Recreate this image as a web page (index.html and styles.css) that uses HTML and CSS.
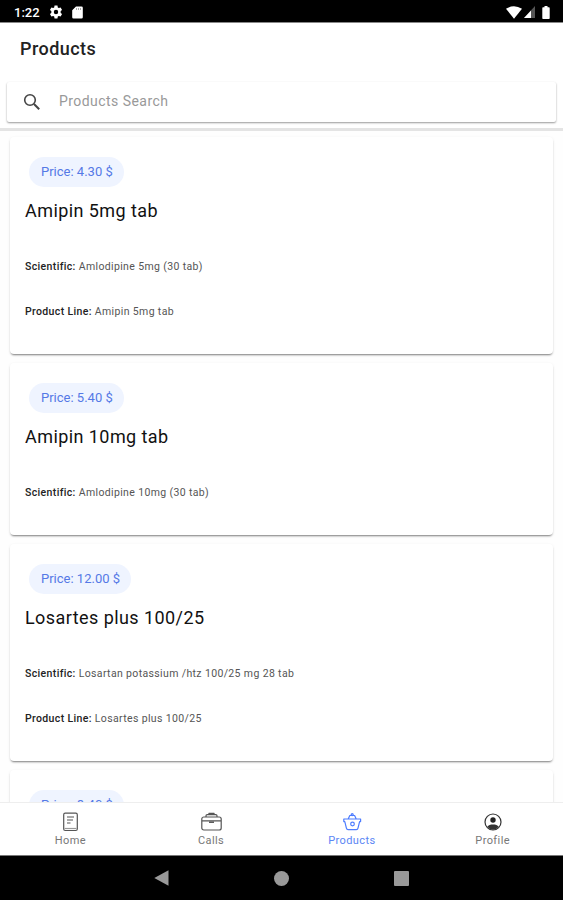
FILE: index.html
```html
<!DOCTYPE html>
<html lang="en">
<head>
    <meta charset="UTF-8">
    <meta name="viewport" content="width=device-width, initial-scale=1.0">
    <title>Products</title>
    <link rel="stylesheet" href="styles.css">
</head>
<body>
    <div class="status-bar">
        <span class="time">1:22</span>
        <svg class="gear" width="14" height="14" viewBox="0 0 24 24"><path fill="#fff" fill-rule="evenodd" d="M9.5 1h5l.6 3.2 1.8 1 3-1.100 2.500 4.300-2.400 2v3.200l2.400 2-2.500 4.300-3-1.100-1.800 1-.6 3.200h-5l-.6-3.200-1.800-1-3 1.100-2.500-4.300 2.400-2v-3.200l-2.400-2 2.500-4.300 3 1.100 1.800-1zM12 8.200a3.800 3.800 0 1 0 0 7.600 3.800 3.800 0 0 0 0-7.600z"/></svg>
        <svg class="sd" width="11" height="13" viewBox="0 0 11 13"><path fill="#fff" d="M4 .5h5.500a1.300 1.300 0 0 1 1.300 1.300v9.400a1.300 1.300 0 0 1-1.300 1.300h-8A1.300 1.300 0 0 1 .2 11.200V4.300z"/><path stroke="#aaa" d="M4.500 2v2M6.500 2v2M8.500 2v2"/></svg>
        <div class="status-right">
            <svg width="16" height="13" viewBox="0 0 16 13"><path fill="#fff" d="M0 2.800Q8-2.300 16 2.800L8 12.800z"/></svg>
            <svg class="signal" width="11" height="12" viewBox="0 0 11 12"><path fill="#555" d="M11 0v12H0z"/><path fill="#fff" d="M7 4.400V12H0z"/></svg>
            <svg class="battery" width="8" height="13" viewBox="0 0 8 13"><path fill="#fff" d="M2.500 0h3v1.300h1.200c.6 0 1 .4 1 1V12c0 .6-.4 1-1 1H1.300c-.6 0-1-.4-1-1V2.300c0-.6.400-1 1-1h1.200z"/></svg>
        </div>
    </div>

    <header class="header">
        <h1>Products</h1>
        <div class="search">
            <svg width="18" height="18" viewBox="0 0 18 18"><g fill="none" stroke="#444" stroke-width="1.600"><circle cx="7" cy="7" r="5.300"/><path stroke-width="2" d="M11 11l5.200 5.200"/></g></svg>
            <span>Products Search</span>
        </div>
    </header>

    <main class="list">
        <div class="card">
            <span class="price">Price: 4.30 $</span>
            <h2>Amipin 5mg tab</h2>
            <p><b>Scientific:</b> Amlodipine 5mg (30 tab)</p>
            <p><b>Product Line:</b> Amipin 5mg tab</p>
        </div>
        <div class="card">
            <span class="price">Price: 5.40 $</span>
            <h2>Amipin 10mg tab</h2>
            <p><b>Scientific:</b> Amlodipine 10mg (30 tab)</p>
        </div>
        <div class="card">
            <span class="price">Price: 12.00 $</span>
            <h2>Losartes plus 100/25</h2>
            <p><b>Scientific:</b> Losartan potassium /htz 100/25 mg 28 tab</p>
            <p><b>Product Line:</b> Losartes plus 100/25</p>
        </div>
        <div class="card">
            <span class="price">Price: 8.40 $</span>
        </div>
    </main>

    <nav class="tabs">
        <a class="tab">
            <svg width="22" height="20" viewBox="0 0 22 20"><g fill="none" stroke="#555" stroke-width="1.200"><rect x="4.700" y="1.200" width="13.600" height="17.300" rx="1.500"/><path d="M8 5h7M8 8h6M8 11h3.500"/><path stroke="#999" d="M5.500 16.500h12"/></g></svg>
            <span>Home</span>
        </a>
        <a class="tab">
            <svg width="22" height="20" viewBox="0 0 22 20"><g fill="none" stroke="#555" stroke-width="1.200"><rect x="1.800" y="5" width="19.400" height="13" rx="2"/><path d="M6 5V3.800c0-.7.500-1.100 1.200-1.100h8.600c.7 0 1.200.4 1.200 1.100V5M8.500 2.500l.6-1.200h4.800l.6 1.200M2 8.800h19"/><path stroke-width="1.500" d="M9 10.200h5"/></g></svg>
            <span>Calls</span>
        </a>
        <a class="tab active">
            <svg width="22" height="20" viewBox="0 0 22 20"><g fill="none" stroke="#4d7cff" stroke-width="1.200" stroke-linejoin="round"><path d="M2.800 7h16.800v2.600h-1l-1.600 6.600c-.2 1-.8 1.500-1.700 1.500H7.100c-.9 0-1.500-.5-1.700-1.500L3.800 9.600h-1zM7.300 6.800l1.500-3.300h4.800l1.500 3.300"/><circle cx="11.200" cy="2.600" r="1"/><circle cx="11.500" cy="12" r="1.800"/></g></svg>
            <span>Products</span>
        </a>
        <a class="tab">
            <svg width="22" height="20" viewBox="0 0 22 20"><circle cx="11" cy="10" r="8" fill="none" stroke="#333" stroke-width="1.200"/><circle cx="11" cy="8" r="2.700" fill="#222"/><path fill="#333" d="M5.300 14.800c1-1.700 3.200-2.300 5.700-2.300s4.700.6 5.700 2.300A7.500 7.500 0 0 1 11 17.800a7.500 7.500 0 0 1-5.700-3z"/></svg>
            <span>Profile</span>
        </a>
    </nav>

    <div class="android-nav">
        <svg width="15" height="16" viewBox="0 0 15 16"><path fill="#999" d="M14.500.3v15.400L.3 8z"/></svg>
        <div class="circle"></div>
        <div class="square"></div>
    </div>
</body>
</html>
```

FILE: styles.css
```css
* { box-sizing: border-box; }
body { margin: 0; height: 900px; display: flex; flex-direction: column; overflow: hidden; background: #fff; color: #111; font-family: Roboto, sans-serif; }
h1, h2, p { margin: 0; }
svg { display: block; flex: none; }

.status-bar { flex: none; height: 23px; display: flex; align-items: center; background: #000; color: #fff; padding: 2px 13px 0 14px; border-bottom: 1px solid #888; }
.time { width: 35px; font-size: 13px; font-weight: 500; }
.sd { margin-left: 9px; }
.status-right { margin-left: auto; display: flex; align-items: center; }
.signal { margin-left: 2px; }
.battery { margin-left: 7px; }

.header { flex: none; height: 108px; padding: 0 7px; border-bottom: 3px solid #e4e4e4; }
.header h1 { height: 59px; padding: 15px 0 0 13px; font-size: 18px; line-height: 21px; font-weight: 500; letter-spacing: 0.45px; color: #222; }
.search { height: 40px; display: flex; align-items: center; padding: 0 16px 1px; border-radius: 2px; box-shadow: 0 1px 2px rgba(0, 0, 0, 0.4); }
.search span { margin-left: 18px; font-size: 14px; line-height: 16px; padding-bottom: 1px; letter-spacing: 0.45px; color: #999; }

.list { flex: 1; min-height: 0; overflow: hidden; padding: 6px 10px 0; background: #fefefe; }
.card { padding: 20px 15px 21px; margin-bottom: 9px; border-radius: 4px; background: #fff; box-shadow: 0 2px 2px -1px rgba(0, 0, 0, 0.45), 0 1px 3px rgba(0, 0, 0, 0.1); }
.price { display: block; width: fit-content; height: 30px; margin-left: 4px; padding: 0 11px 0 12px; border-radius: 15px; background: #eff4ff; color: #5579e6; font-size: 13px; line-height: 29px; }
.card h2 { margin: 11px 0 19px; font-size: 18px; line-height: 26px; font-weight: 400; letter-spacing: 0.43px; }
.card p { height: 45px; padding-top: 17px; font-size: 10.5px; line-height: 14px; letter-spacing: 0.36px; color: #555; }
.card b { font-weight: 500; color: #222; }

.tabs { flex: none; height: 54px; display: flex; border-top: 1px solid #eee; border-bottom: 1px solid #777; background: #fff; }
.tab { flex: 1; display: flex; flex-direction: column; align-items: center; padding-top: 9px; font-size: 11px; color: #777; }
.tab span { line-height: 14px; margin-top: 2px; letter-spacing: 0.4px; }
.active { color: #5b86f5; }

.android-nav { flex: none; height: 44px; display: flex; justify-content: center; align-items: center; background: #000; gap: 105px; }
.circle { width: 15px; height: 15px; border-radius: 50%; background: #999; }
.square { width: 15px; height: 15px; border-radius: 1px; background: #999; }
```
